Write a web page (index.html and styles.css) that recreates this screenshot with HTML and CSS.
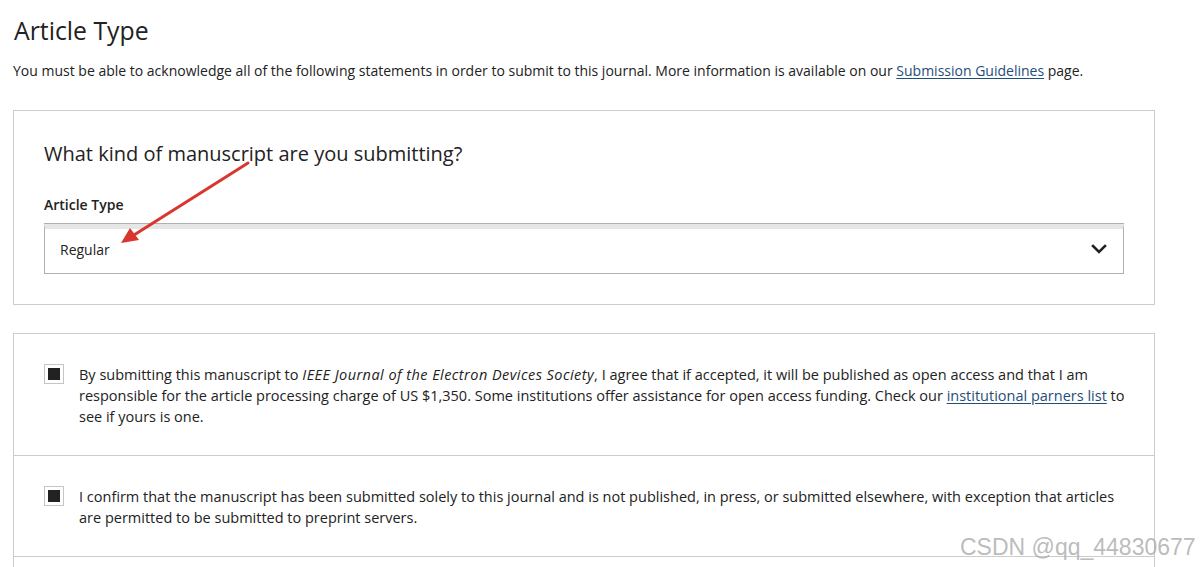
FILE: index.html
```html
<!DOCTYPE html>
<html lang="en">
<head>
<meta charset="utf-8">
<title>Article Type</title>
<link rel="stylesheet" href="styles.css">
</head>
<body>
<div class="page">
  <h1 class="title">Article Type</h1>
  <p class="intro">You must be able to acknowledge all of the following statements in order to submit to this journal. More information is available on our <a href="#" class="link">Submission Guidelines</a> page.</p>

  <section class="card">
    <h2 class="question">What kind of manuscript are you submitting?</h2>
    <div class="label">Article Type</div>
    <div class="select">
      <span class="select-value">Regular</span>
      <svg class="chevron" width="16" height="12" viewBox="0 0 16 12"><path d="M2 3 L8 9 L14 3" fill="none" stroke="#222" stroke-width="2.6" stroke-linecap="square"/></svg>
    </div>
  </section>

  <section class="card list">
    <div class="row">
      <span class="checkbox"><span class="check-fill"></span></span>
      <p class="row-text">By submitting this manuscript to <em>IEEE Journal of the Electron Devices Society</em>, I agree that if accepted, it will be published as open access and that I am responsible for the article processing charge of US $1,350. Some institutions offer assistance for open access funding. Check our <a href="#" class="link">institutional parners list</a> to see if yours is one.</p>
    </div>
    <div class="row">
      <span class="checkbox"><span class="check-fill"></span></span>
      <p class="row-text">I confirm that the manuscript has been submitted solely to this journal and is not published, in press, or submitted elsewhere, with exception that articles are permitted to be submitted to preprint servers.</p>
    </div>
    <div class="row row-empty"></div>
  </section>
</div>

<svg class="arrow" width="1201" height="567" viewBox="0 0 1201 567">
  <line x1="248" y1="163" x2="134" y2="235" stroke="#d9362f" stroke-width="3" stroke-linecap="round"/>
  <path d="M121 243 L130 228 L139 240 Z" fill="#d9362f"/>
</svg>
<div class="watermark">CSDN @qq_44830677</div>
</body>
</html>
```

FILE: styles.css
```css
html, body {
  margin: 0;
  padding: 0;
  background: #ffffff;
  overflow: hidden;
}
body {
  font-family: "Open Sans", "Liberation Sans", sans-serif;
  color: #222222;
  width: 1201px;
  height: 567px;
  position: relative;
}
.page {
  padding: 0 46px 0 13px;
  height: 567px;
  overflow: hidden;
}
.title {
  font-size: 24.8px;
  font-weight: 400;
  line-height: 32px;
  margin: 14px 0 0 1px;
  color: #222;
}
.intro {
  font-size: 14px;
  line-height: 20px;
  margin: 15px 0 29px 0;
}
.link {
  color: #1f4e79;
  text-decoration: underline;
  text-underline-offset: 2px;
}
.card {
  border: 1px solid #cccccc;
  padding: 29px 30px 30px 30px;
  margin-bottom: 28px;
}
.question {
  font-size: 20px;
  font-weight: 400;
  line-height: 28px;
  margin: 0 0 27px 0;
}
.label {
  font-size: 14px;
  font-weight: 600;
  line-height: 20px;
  margin-bottom: 9px;
}
.select {
  border: 1px solid #b0b0b0;
  border-top: 5px solid #e6e6e6;
  box-shadow: 0 -1px 0 #b0b0b0;
  margin-top: 1px;
  display: flex;
  align-items: center;
  justify-content: space-between;
  padding: 0 16px 0 15px;
  height: 44px;
  font-size: 14px;
}
.select-value {
  line-height: 20px;
  margin-top: -3px;
}
.chevron {
  display: block;
  margin-top: -4px;
}
.card.list {
  padding: 0;
}
.row {
  display: flex;
  align-items: flex-start;
  gap: 15px;
  padding: 30px 27px 28px 30px;
  border-bottom: 1px solid #cccccc;
}
.row-empty {
  border-bottom: none;
  height: 40px;
}
.checkbox {
  flex: none;
  width: 18px;
  height: 18px;
  border: 1px solid #c4c4c4;
  display: flex;
  align-items: center;
  justify-content: center;
}
.check-fill {
  width: 12px;
  height: 12px;
  background: #222222;
}
.row-text {
  margin: 0;
  font-size: 14.5px;
  line-height: 21px;
}
.row-text em {
  font-style: italic;
  letter-spacing: 0.45px;
}
.arrow {
  position: absolute;
  left: 0;
  top: 0;
  pointer-events: none;
}
.watermark {
  position: absolute;
  left: 960px;
  top: 533px;
  font-family: "Liberation Sans", Arial, sans-serif;
  font-size: 23px;
  line-height: 28px;
  color: rgba(170, 170, 170, 0.8);
  white-space: nowrap;
}
```
